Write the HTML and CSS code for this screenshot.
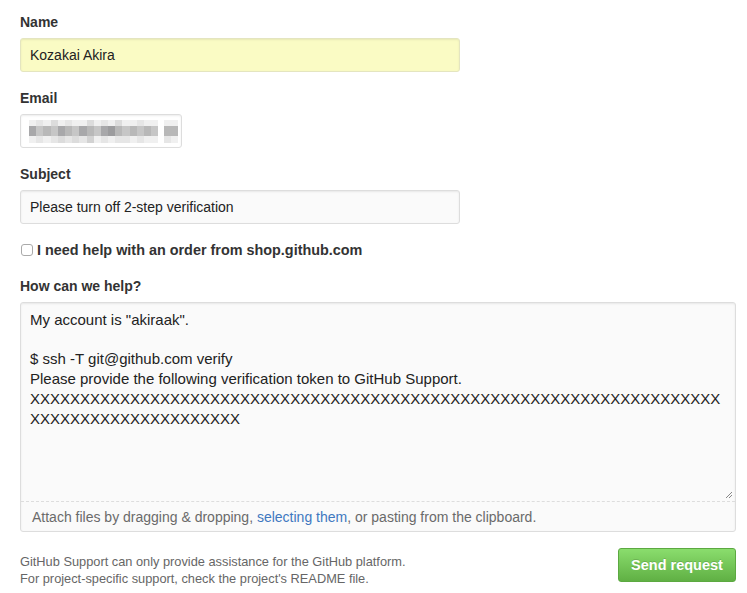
FILE: index.html
```html
<!DOCTYPE html>
<html>
<head>
<meta charset="utf-8">
<link rel="stylesheet" href="styles.css">
</head>
<body>
<form class="form">
  <div class="group">
    <label class="label">Name</label>
    <div class="input input-wide input-autofill">Kozakai Akira</div>
  </div>
  <div class="group">
    <label class="label">Email</label>
    <div class="input input-email">
      <div class="blur">
        <div class="blur-main">
          <div class="brow r1"><i class="c1"></i><i class="c2"></i><i class="c1"></i><i class="c3"></i><i class="c1"></i><i class="c2"></i><i class="c1"></i><i class="c1"></i><i class="c3"></i><i class="c1"></i><i class="c2"></i><i class="c1"></i><i class="c3"></i><i class="c1"></i><i class="c1"></i><i class="c2"></i><i class="c1"></i><i class="c1"></i></div>
          <div class="brow r2"><i class="d3"></i><i class="d1"></i><i class="d2"></i><i class="d1"></i><i class="d3"></i><i class="d2"></i><i class="d1"></i><i class="d3"></i><i class="d2"></i><i class="d1"></i><i class="d3"></i><i class="d4"></i><i class="d2"></i><i class="d1"></i><i class="d2"></i><i class="d1"></i><i class="d2"></i><i class="d1"></i></div>
          <div class="brow r3"><i class="c1"></i><i class="c2"></i><i class="c1"></i><i class="c2"></i><i class="c3"></i><i class="c2"></i><i class="c3"></i><i class="c2"></i><i class="c4"></i><i class="c1"></i><i class="c2"></i><i class="c1"></i><i class="c2"></i><i class="c2"></i><i class="c1"></i><i class="c2"></i><i class="c1"></i><i class="c1"></i></div>
        </div>
        <div class="blur-tail">
          <div class="brow r1"><i class="c1"></i><i class="c1"></i></div>
          <div class="brow r2"><i class="d2"></i><i class="d2"></i></div>
          <div class="brow r3"><i class="c2"></i><i class="c1"></i></div>
        </div>
      </div>
    </div>
  </div>
  <div class="group">
    <label class="label">Subject</label>
    <div class="input input-wide">Please turn off 2-step verification</div>
  </div>
  <div class="group">
    <label class="check-label"><span class="checkbox"></span>I need help with an order from shop.github.com</label>
  </div>
  <div class="group">
    <label class="label">How can we help?</label>
    <div class="write">
      <div class="textarea">
        <div class="line">My account is "akiraak".</div>
        <div class="line">&nbsp;</div>
        <div class="line">$ ssh -T git@github.com verify</div>
        <div class="line">Please provide the following verification token to GitHub Support.</div>
        <div class="line">XXXXXXXXXXXXXXXXXXXXXXXXXXXXXXXXXXXXXXXXXXXXXXXXXXXXXXXXXXXXXXXXXXXXX</div>
        <div class="line">XXXXXXXXXXXXXXXXXXXXX</div>
        <svg class="grip" width="8" height="8" viewBox="0 0 8 8"><path d="M7 1 L1 7 M7 4 L4 7" stroke="#888" stroke-width="1"/></svg>
      </div>
      <div class="drag"><span>Attach files by dragging &amp; dropping, <a class="link">selecting them</a>, or pasting from the clipboard.</span></div>
    </div>
  </div>
  <div class="actions">
    <p class="note">GitHub Support can only provide assistance for the GitHub platform.<br>For project-specific support, check the project's README file.</p>
    <button type="button" class="btn">Send request</button>
  </div>
</form>
</body>
</html>
```

FILE: styles.css
```css
* { box-sizing: border-box; }
html, body { margin: 0; padding: 0; background: #fff; }
body {
  font-family: "Liberation Sans", Arial, Helvetica, sans-serif;
  font-size: 14px;
  color: #333;
}
.form {
  padding: 12px 11px 0 20px;
  display: flex;
  flex-direction: column;
}
.group {
  display: flex;
  flex-direction: column;
  margin-bottom: 16px;
}
.label {
  font-weight: bold;
  line-height: 20px;
  margin-bottom: 6px;
  font-size: 14px;
}
.input {
  height: 34px;
  border: 1px solid #ddd;
  border-radius: 3px;
  background: #fafafa;
  box-shadow: inset 0 1px 2px rgba(0,0,0,0.075);
  padding: 0 9px;
  display: flex;
  align-items: center;
  font-size: 14px;
  color: #222;
}
.input-wide { width: 440px; }
.input-autofill { background: #fafbc4; border-color: #e4e5c0; }
.input-email { width: 162px; padding: 0 5px 0 8px; background: #fff; }
.blur { display: flex; gap: 6px; }
.brow { display: flex; }
.brow i { display: block; width: 7.2px; }
.blur-tail .brow i { width: 7px; }
.r1 { height: 6px; }
.r2 { height: 10px; }
.r3 { height: 7px; }
.c1 { background: #f0f0f0; }
.c2 { background: #e6e6e6; }
.c3 { background: #dcdcdc; }
.c4 { background: #d2d2d2; }
.d1 { background: #c6c6c6; }
.d2 { background: #b8b8b8; }
.d3 { background: #a8a8aa; }
.d4 { background: #9c9c9e; }
.check-label {
  display: flex;
  align-items: center;
  font-weight: bold;
  line-height: 20px;
  font-size: 14.4px;
}
.checkbox {
  width: 12px;
  height: 12px;
  border: 1px solid #aaa;
  border-radius: 3px;
  background: #fff;
  margin: 0 4px 0 1px;
}
.write {
  width: 716px;
  border: 1px solid #ddd;
  border-radius: 3px;
  background: #fafafa;
  box-shadow: inset 0 1px 2px rgba(0,0,0,0.075);
}
.textarea {
  position: relative;
  height: 199px;
  padding: 7px 9px;
  font-size: 15px;
  line-height: 19.7px;
  color: #222;
  border-bottom: 1px dashed #ddd;
}
.line { white-space: nowrap; }
.grip { position: absolute; right: 2px; bottom: 2px; }
.drag {
  height: 29px;
  padding: 0 11px;
  display: flex;
  align-items: center;
  font-size: 14px;
  color: #6a6a6a;
}
.link { color: #4078c0; }
.actions {
  display: flex;
  justify-content: space-between;
  align-items: flex-start;
}
.note {
  margin: 5px 0 0;
  font-size: 12.8px;
  line-height: 17px;
  color: #666;
}
.btn {
  width: 118px;
  height: 34px;
  border: 1px solid #5ca941;
  border-radius: 3px;
  background: linear-gradient(#8add6d, #60b044);
  color: #fff;
  font-family: "Liberation Sans", Arial, sans-serif;
  font-weight: bold;
  font-size: 14.5px;
  text-shadow: 0 -1px 0 rgba(0,0,0,0.15);
  padding: 0;
}
```
